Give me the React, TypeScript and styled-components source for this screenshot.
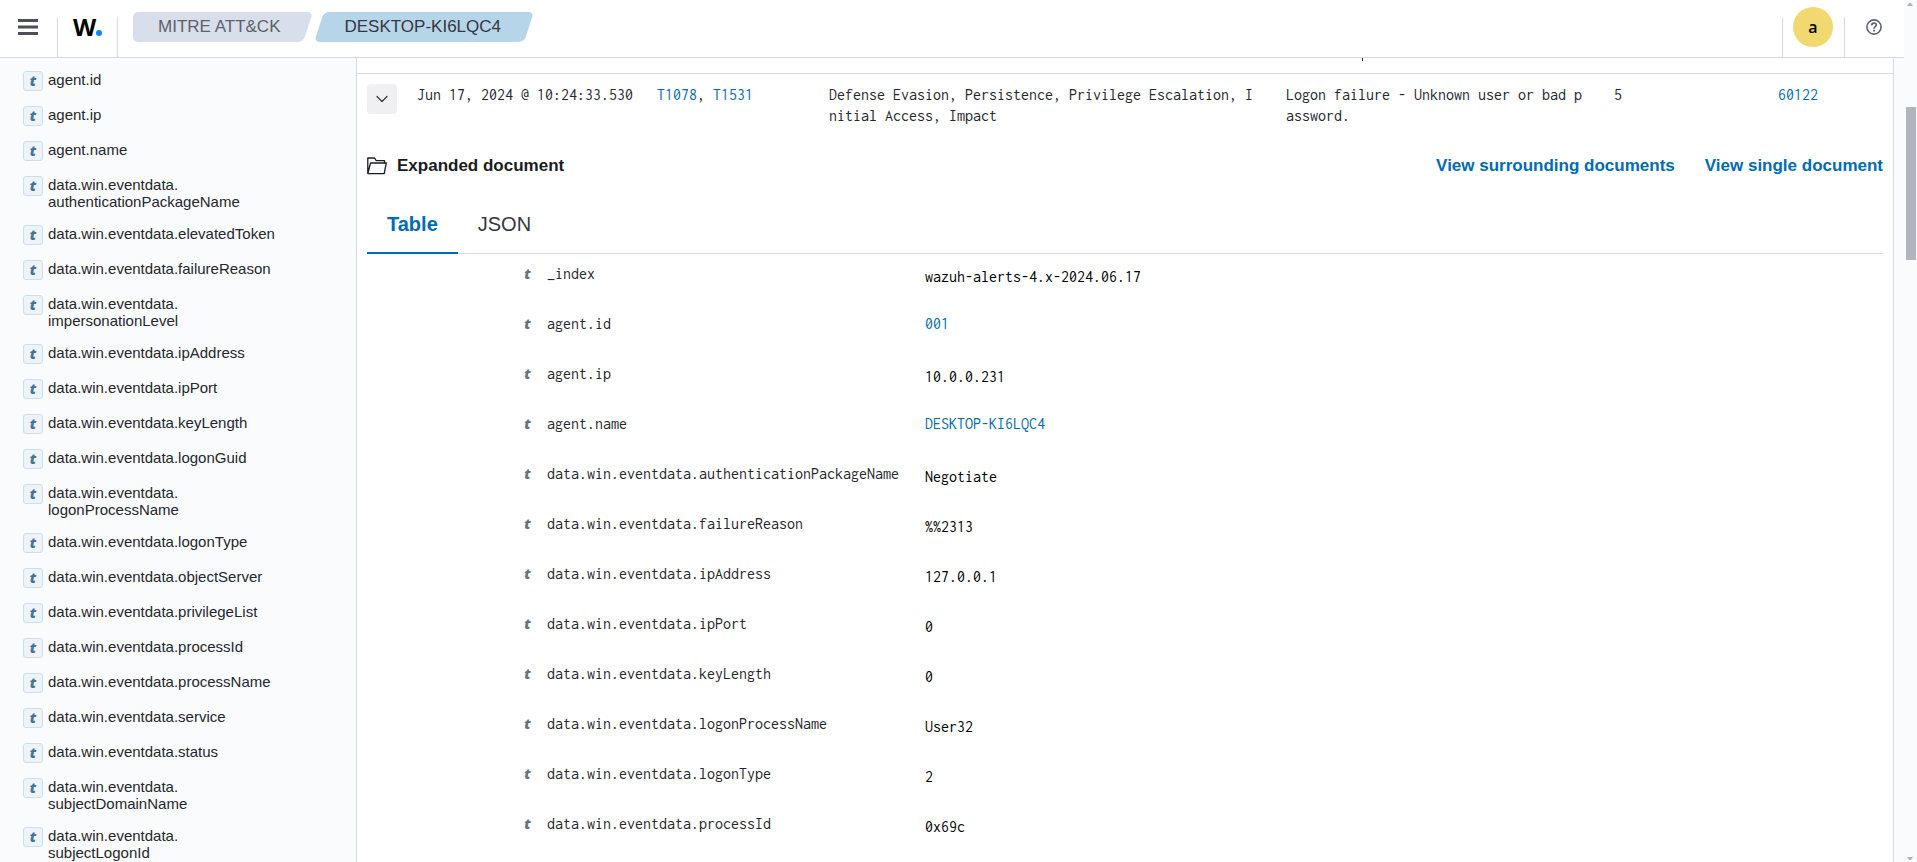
import React from "react";
import styled, { createGlobalStyle } from "styled-components";

const color = {
  text: "#25272d",
  title: "#1a1c21",
  muted: "#69707d",
  link: "#006bb4",
  border: "#d3dae6",
  page: "#fafbfd",
};

const GlobalStyle = createGlobalStyle`
  *, *::before, *::after { box-sizing: border-box; }
  body {
    margin: 0;
    overflow: hidden;
    background: ${color.page};
    color: ${color.text};
    font-family: "Liberation Sans", Arial, sans-serif;
    font-size: 15px;
    line-height: 17px;
  }
  button {
    padding: 0;
    border: 0;
    background: none;
    color: inherit;
    font: inherit;
    cursor: pointer;
  }
  a { color: ${color.link}; text-decoration: none; }
  ul { margin: 0; padding: 0; list-style: none; }
`;

const Page = styled.div`
  display: grid;
  grid-template-columns: minmax(0, 1fr) 13px;
  height: 100vh;
`;

const Workspace = styled.div`
  display: flex;
  flex-direction: column;
  min-height: 0;
`;

/* Header */

const Header = styled.header`
  display: flex;
  align-items: flex-start;
  flex: none;
  height: 58px;
  border-bottom: 1px solid ${color.border};
  background: #fff;
`;

const HeaderButton = styled.button<{ $width: number }>`
  display: flex;
  align-items: center;
  justify-content: center;
  width: ${(p) => p.$width}px;
  height: 54px;
  padding-right: 1px;
`;

const Divider = styled.span`
  align-self: flex-end;
  width: 1px;
  height: 40px;
  background: ${color.border};
`;

const Logo = styled.a`
  display: flex;
  align-items: center;
  justify-content: center;
  width: 59px;
  height: 54px;
  color: #000;
  font: 700 24px/24px "Open Sans", sans-serif;
`;

const LogoDot = styled.span`
  width: 6px;
  height: 6px;
  margin-top: 12px;
  border-radius: 50%;
  background: #0a84ff;
`;

const Breadcrumbs = styled.nav`
  display: flex;
  flex: 1;
  gap: 11px;
  padding: 12px 15px;
`;

const Crumb = styled.a<{ $current?: boolean }>`
  position: relative;
  z-index: 0;
  padding: 0 28px 0 25px;
  color: ${(p) => (p.$current ? "#343741" : "#5d616b")};
  font-size: 17px;
  line-height: 30px;

  &::before,
  &::after {
    content: "";
    position: absolute;
    z-index: -1;
    inset: 0;
    border-radius: 5px;
    background: ${(p) => (p.$current ? "#b7d5e9" : "#d9dfea")};
  }
  &::before {
    right: ${(p) => (p.$current ? "0" : "20px")};
    display: ${(p) => (p.$current ? "none" : "block")};
  }
  &::after {
    left: ${(p) => (p.$current ? "0" : "20px")};
    transform: skewX(-18deg);
  }
`;

const Avatar = styled.span`
  display: flex;
  align-items: center;
  justify-content: center;
  width: 40px;
  height: 40px;
  border-radius: 50%;
  background: #f1d86f;
  color: #000;
  font: 600 16px/24px "Open Sans", sans-serif;
`;

/* Sidebar with the available fields */

const Body = styled.div`
  display: flex;
  flex: 1;
  min-height: 0;
  overflow: hidden;
`;

const Sidebar = styled.aside`
  flex: none;
  width: 357px;
  padding: 13px 23px 0;
  overflow: hidden;
  border-right: 1px solid ${color.border};
`;

const Field = styled.li`
  margin-bottom: 15px;
`;

const FieldButton = styled.button`
  display: flex;
  gap: 5px;
  align-items: flex-start;
  min-height: 20px;
  text-align: left;
`;

const TypeMark = styled.span`
  color: ${color.muted};
  font: italic 800 14px/18px "Open Sans", sans-serif;
`;

const TypeBadge = styled(TypeMark)`
  width: 20px;
  height: 20px;
  border: 1px solid #ccdfec;
  border-radius: 3px;
  background: #edf3f8;
  color: #4a7194;
  text-align: center;
`;

/* Results */

const Main = styled.main`
  flex: 1;
  min-width: 0;
  margin-right: 10px;
  overflow: hidden;
  border-right: 1px solid ${color.border};
  background: #fff;
`;

const DocTable = styled.table`
  width: 100%;
  border-collapse: collapse;
  table-layout: fixed;
  font: 16px/21px Inconsolata, "Liberation Mono", monospace;
`;

const Col = styled.col<{ $width?: string }>`
  width: ${(p) => p.$width ?? "auto"};
`;

const ScrolledRow = styled.tr`
  height: 15px;
  border-bottom: 1px solid ${color.border};
`;

const ScrolledCell = styled.td`
  padding: 0 10px;
  vertical-align: top;
`;

const Descender = styled.span`
  display: block;
  width: 1px;
  height: 3px;
  margin-left: 76px;
  background: ${color.text};
`;

const Cell = styled.td<{ $nowrap?: boolean }>`
  height: 61px;
  padding: 10px 18px 0 10px;
  vertical-align: top;
  white-space: ${(p) => (p.$nowrap ? "nowrap" : "normal")};
  word-break: break-all;
`;

const ToggleButton = styled.button`
  display: flex;
  align-items: center;
  justify-content: center;
  width: 30px;
  height: 30px;
  border-radius: 4px;
  background: #f0f0f3;
`;

const ExpandedCell = styled.td`
  padding: 20px 10px 0;
`;

const ExpandedHeader = styled.div`
  display: flex;
  gap: 30px;
  align-items: center;
  font: 700 17px/24px "Liberation Sans", Arial, sans-serif;
`;

const ExpandedTitle = styled.h2`
  display: flex;
  flex: 1;
  gap: 10px;
  align-items: center;
  margin: 0;
  color: ${color.title};
  font: inherit;
`;

const Tabs = styled.div`
  display: flex;
  height: 60px;
  margin-top: 16px;
  border-bottom: 1px solid ${color.border};
`;

const Tab = styled.button<{ $active?: boolean }>`
  height: 60px;
  padding: 2px 20px 0;
  border-bottom: 2px solid ${(p) => (p.$active ? color.link : "transparent")};
  color: ${(p) => (p.$active ? color.link : "#343741")};
  font: ${(p) => (p.$active ? 700 : 400)} 20px/30px "Liberation Sans", Arial, sans-serif;
`;

const DetailTable = styled.table`
  width: 100%;
  border-collapse: collapse;
  table-layout: fixed;
`;

const DetailCell = styled.td<{ $lowered?: boolean; $center?: boolean }>`
  height: 50px;
  padding: ${(p) => (p.$lowered ? "12px" : "9px")} 0 0 0;
  color: ${(p) => (p.$lowered ? "#000" : color.text)};
  text-align: ${(p) => (p.$center ? "center" : "left")};
  vertical-align: top;
`;

const DetailName = styled.th`
  padding: 9px 0 0;
  font-weight: 400;
  text-align: left;
  vertical-align: top;
`;

/* Page scrollbar */

const Scrollbar = styled.div`
  display: grid;
  grid-template-rows: 8px 99fr 153px 594fr 8px;
  justify-items: center;
  padding-right: 1px;
`;

const Arrow = styled.svg<{ $row: number }>`
  display: block;
  grid-row: ${(p) => p.$row};
  width: 6px;
  height: 8px;
`;

const Thumb = styled.span`
  grid-row: 3;
  width: 10px;
  margin-left: 1px;
  background: #b0b5bd;
`;

const fields: string[][] = [
  ["agent.id"],
  ["agent.ip"],
  ["agent.name"],
  ["data.win.eventdata.", "authenticationPackageName"],
  ["data.win.eventdata.elevatedToken"],
  ["data.win.eventdata.failureReason"],
  ["data.win.eventdata.", "impersonationLevel"],
  ["data.win.eventdata.ipAddress"],
  ["data.win.eventdata.ipPort"],
  ["data.win.eventdata.keyLength"],
  ["data.win.eventdata.logonGuid"],
  ["data.win.eventdata.", "logonProcessName"],
  ["data.win.eventdata.logonType"],
  ["data.win.eventdata.objectServer"],
  ["data.win.eventdata.privilegeList"],
  ["data.win.eventdata.processId"],
  ["data.win.eventdata.processName"],
  ["data.win.eventdata.service"],
  ["data.win.eventdata.status"],
  ["data.win.eventdata.", "subjectDomainName"],
  ["data.win.eventdata.", "subjectLogonId"],
];

const details: { name: string; value: string; link?: boolean }[] = [
  { name: "_index", value: "wazuh-alerts-4.x-2024.06.17" },
  { name: "agent.id", value: "001", link: true },
  { name: "agent.ip", value: "10.0.0.231" },
  { name: "agent.name", value: "DESKTOP-KI6LQC4", link: true },
  { name: "data.win.eventdata.authenticationPackageName", value: "Negotiate" },
  { name: "data.win.eventdata.failureReason", value: "%%2313" },
  { name: "data.win.eventdata.ipAddress", value: "127.0.0.1" },
  { name: "data.win.eventdata.ipPort", value: "0" },
  { name: "data.win.eventdata.keyLength", value: "0" },
  { name: "data.win.eventdata.logonProcessName", value: "User32" },
  { name: "data.win.eventdata.logonType", value: "2" },
  { name: "data.win.eventdata.processId", value: "0x69c" },
];

const MenuIcon = () => (
  <svg width="20" height="16" viewBox="0 0 20 16" fill="#4c4e58">
    <path d="M0 0h20v3H0zM0 6.5h20v3H0zM0 13h20v3H0z" />
  </svg>
);

const HelpIcon = () => (
  <svg width="16" height="16" viewBox="0 0 16 16" fill="none" stroke="#5f6270">
    <circle cx="8" cy="8" r="7.1" strokeWidth="1.6" />
    <path d="M5.7 6.4C5.7 4.9 6.7 4.1 8 4.1s2.3.8 2.3 2c0 1.6-2.3 1.7-2.3 3.6" strokeWidth="1.6" />
    <path d="M8 10.8v1.6" strokeWidth="1.8" />
  </svg>
);

const ChevronIcon = () => (
  <svg width="12" height="8" viewBox="0 0 12 8" fill="none" stroke="#343741" strokeWidth="1.2">
    <path d="M1 1.500l5 5 5-5" strokeLinecap="round" strokeLinejoin="round" />
  </svg>
);

const FolderIcon = () => (
  <svg width="20" height="18" viewBox="0 0 20 18" fill="none" stroke="#1a1c21" strokeWidth="1.3" strokeLinejoin="round">
    <path d="M17.500 6V3.700H9.200L7.600 1H.8v15.600h16.400L19.300 6H3.500L.9 16.300" />
  </svg>
);

export default function App() {
  return (
    <>
      <GlobalStyle />
      <Page>
        <Workspace>
          <Header>
            <HeaderButton $width={57} aria-label="Toggle navigation">
              <MenuIcon />
            </HeaderButton>
            <Divider />
            <Logo href="#home">
              W<LogoDot />
            </Logo>
            <Divider />
            <Breadcrumbs aria-label="Breadcrumbs">
              <Crumb href="#mitre">MITRE ATT&amp;CK</Crumb>
              <Crumb href="#agent" $current>
                DESKTOP-KI6LQC4
              </Crumb>
            </Breadcrumbs>
            <Divider />
            <HeaderButton $width={61} aria-label="Account">
              <Avatar>a</Avatar>
            </HeaderButton>
            <Divider />
            <HeaderButton $width={59} aria-label="Help">
              <HelpIcon />
            </HeaderButton>
          </Header>

          <Body>
            <Sidebar>
              <ul>
                {fields.map((parts) => (
                  <Field key={parts.join("")}>
                    <FieldButton>
                      <TypeBadge>t</TypeBadge>
                      <span>
                        {parts[0]}
                        {parts[1] && <br />}
                        {parts[1]}
                      </span>
                    </FieldButton>
                  </Field>
                ))}
              </ul>
            </Sidebar>

            <Main>
              <DocTable>
                <colgroup>
                  <Col $width="50px" />
                  <Col $width="240px" />
                  <Col $width="172px" />
                  <Col $width="457px" />
                  <Col $width="328px" />
                  <Col $width="164px" />
                  <Col />
                </colgroup>
                <tbody>
                  <ScrolledRow>
                    <ScrolledCell colSpan={4} />
                    <ScrolledCell colSpan={3}>
                      <Descender />
                    </ScrolledCell>
                  </ScrolledRow>
                  <tr>
                    <Cell>
                      <ToggleButton aria-label="Toggle row details" aria-expanded="true">
                        <ChevronIcon />
                      </ToggleButton>
                    </Cell>
                    <Cell $nowrap>Jun 17, 2024 @ 10:24:33.530</Cell>
                    <Cell>
                      <a href="#T1078">T1078</a>, <a href="#T1531">T1531</a>
                    </Cell>
                    <Cell>Defense Evasion, Persistence, Privilege Escalation, Initial Access, Impact</Cell>
                    <Cell>Logon failure - Unknown user or bad password.</Cell>
                    <Cell>5</Cell>
                    <Cell>
                      <a href="#60122">60122</a>
                    </Cell>
                  </tr>
                  <tr>
                    <ExpandedCell colSpan={7}>
                      <ExpandedHeader>
                        <ExpandedTitle>
                          <FolderIcon />
                          Expanded document
                        </ExpandedTitle>
                        <a href="#surrounding">View surrounding documents</a>
                        <a href="#single">View single document</a>
                      </ExpandedHeader>
                      <Tabs role="tablist">
                        <Tab role="tab" aria-selected="true" $active>
                          Table
                        </Tab>
                        <Tab role="tab" aria-selected="false">
                          JSON
                        </Tab>
                      </Tabs>
                      <DetailTable>
                        <colgroup>
                          <Col $width="141px" />
                          <Col $width="39px" />
                          <Col $width="378px" />
                          <Col />
                        </colgroup>
                        <tbody>
                          {details.map((d) => (
                            <tr key={d.name}>
                              <DetailCell />
                              <DetailCell $center>
                                <TypeMark>t</TypeMark>
                              </DetailCell>
                              <DetailName scope="row">{d.name}</DetailName>
                              <DetailCell $lowered={!d.link}>
                                {d.link ? <a href={`#${d.value}`}>{d.value}</a> : d.value}
                              </DetailCell>
                            </tr>
                          ))}
                        </tbody>
                      </DetailTable>
                    </ExpandedCell>
                  </tr>
                </tbody>
              </DocTable>
            </Main>
          </Body>
        </Workspace>

        <Scrollbar aria-hidden="true">
          <Arrow $row={1} viewBox="0 0 6 8">
            <path d="M0 6l2-3h2l2 3z" fill="#b0b5bd" />
          </Arrow>
          <Thumb />
          <Arrow $row={5} viewBox="0 0 6 8">
            <path d="M0 3l2 3h2l2-3z" fill="#b0b5bd" />
          </Arrow>
        </Scrollbar>
      </Page>
    </>
  );
}
